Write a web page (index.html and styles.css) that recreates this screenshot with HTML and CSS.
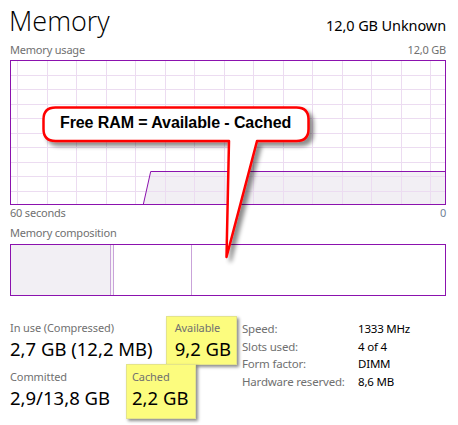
FILE: index.html
```html
<!DOCTYPE html>
<html>
<head>
<meta charset="utf-8">
<link rel="stylesheet" href="styles.css">
</head>
<body>
<div class="page">
  <div class="header">
    <div class="title">Memory</div>
    <div class="subtitle">12,0 GB Unknown</div>
  </div>
  <div class="label-row top-label">
    <span>Memory usage</span><span>12,0 GB</span>
  </div>
  <svg class="graph" width="436" height="145" viewBox="0 0 436 145">
    <polygon points="133.3,144.5 140.7,111.5 435.5,111.5 435.5,144.5" fill="#f2eff4"/>
    <g stroke="#ecdcf1" stroke-width="1">
      <line x1="7.5" y1="0" x2="7.5" y2="145"/>
      <line x1="37.5" y1="0" x2="37.5" y2="145"/>
      <line x1="66.5" y1="0" x2="66.5" y2="145"/>
      <line x1="96.5" y1="0" x2="96.5" y2="145"/>
      <line x1="125.5" y1="0" x2="125.5" y2="145"/>
      <line x1="155.5" y1="0" x2="155.5" y2="145"/>
      <line x1="184.5" y1="0" x2="184.5" y2="145"/>
      <line x1="214.5" y1="0" x2="214.5" y2="145"/>
      <line x1="243.5" y1="0" x2="243.5" y2="145"/>
      <line x1="273.5" y1="0" x2="273.5" y2="145"/>
      <line x1="302.5" y1="0" x2="302.5" y2="145"/>
      <line x1="332.5" y1="0" x2="332.5" y2="145"/>
      <line x1="361.5" y1="0" x2="361.5" y2="145"/>
      <line x1="391.5" y1="0" x2="391.5" y2="145"/>
      <line x1="420.5" y1="0" x2="420.5" y2="145"/>
      <line x1="0" y1="15.5" x2="436" y2="15.5"/>
      <line x1="0" y1="29.5" x2="436" y2="29.5"/>
      <line x1="0" y1="44.5" x2="436" y2="44.5"/>
      <line x1="0" y1="58.5" x2="436" y2="58.5"/>
      <line x1="0" y1="73.5" x2="436" y2="73.5"/>
      <line x1="0" y1="87.5" x2="436" y2="87.5"/>
      <line x1="0" y1="102.5" x2="436" y2="102.5"/>
      <line x1="0" y1="116.5" x2="436" y2="116.5"/>
      <line x1="0" y1="131.5" x2="436" y2="131.5"/>
    </g>
    <polyline points="0,144.5 133.3,144.5 140.7,111.5 436,111.5" fill="none" stroke="#8b12ae" stroke-width="1"/>
    <rect x="0.5" y="0.5" width="435" height="144" fill="none" stroke="#8b12ae" stroke-width="1"/>
  </svg>
  <div class="label-row axis">
    <span>60 seconds</span><span class="zero">0</span>
  </div>
  <div class="label-row comp-label"><span>Memory composition</span></div>
  <div class="composition">
    <div class="seg inuse"></div>
    <div class="seg modified"></div>
    <div class="seg standby"></div>
    <div class="seg free"></div>
  </div>
  <div class="stats">
    <div class="left">
      <div class="stat-row">
        <div class="stat">
          <div class="stat-label">In use (Compressed)</div>
          <div class="stat-value">2,7 GB (12,2 MB)</div>
        </div>
        <div class="stat hl hl-available">
          <div class="stat-label">Available</div>
          <div class="stat-value">9,2 GB</div>
        </div>
      </div>
      <div class="stat-row">
        <div class="stat">
          <div class="stat-label">Committed</div>
          <div class="stat-value">2,9/13,8 GB</div>
        </div>
        <div class="stat hl hl-cached">
          <div class="stat-label">Cached</div>
          <div class="stat-value">2,2 GB</div>
        </div>
      </div>
    </div>
    <div class="props">
      <div class="prop-label">Speed:</div><div class="prop-value">1333 MHz</div>
      <div class="prop-label">Slots used:</div><div class="prop-value">4 of 4</div>
      <div class="prop-label">Form factor:</div><div class="prop-value">DIMM</div>
      <div class="prop-label">Hardware reserved:</div><div class="prop-value">8,6 MB</div>
    </div>
  </div>
</div>

<div class="callout">
  <svg class="callout-shape" width="300" height="170" viewBox="0 0 300 170">
    <defs>
      <filter id="sh" x="-10%" y="-10%" width="130%" height="130%">
        <feDropShadow dx="4" dy="4" stdDeviation="2.2" flood-color="#000" flood-opacity="0.45"/>
      </filter>
    </defs>
    <path d="M 14.5 2.5 H 255.5 Q 267.5 2.5 267.5 14.5 V 24 Q 267.5 36 255.5 36 H 216 L 185.5 152 L 188 36 H 14.5 Q 2.5 36 2.5 24 V 14.5 Q 2.5 2.5 14.5 2.5 Z" fill="#fff" stroke="#ff0000" stroke-width="2.5" stroke-linejoin="round" filter="url(#sh)"/>
  </svg>
  <div class="callout-text">Free RAM = Available - Cached</div>
</div>
</body>
</html>
```
FILE: styles.css
```css
* { box-sizing: border-box; }
html, body { margin: 0; padding: 0; background: #fff; }
body {
  font-family: "Noto Sans", "Open Sans", sans-serif;
  color: #000;
  position: relative;
  width: 458px;
  height: 425px;
  overflow: hidden;
}
.page {
  padding: 0 12px 0 10px;
}
.header {
  display: flex;
  justify-content: space-between;
  align-items: baseline;
  height: 42px;
}
.title {
  font-family: "Open Sans", sans-serif;
  font-weight: 300;
  font-size: 27px;
  line-height: 42px;
  margin-left: -1px;
}
.subtitle {
  font-size: 14.5px;
  letter-spacing: -0.1px;
}
.label-row {
  display: flex;
  justify-content: space-between;
  font-size: 11px;
  letter-spacing: -0.2px;
  color: #707070;
  line-height: 15px;
}
.top-label { height: 18px; margin-top: 0; }
.graph { display: block; }
.axis { height: 20px; }
.zero { color: #6f8196; }
.comp-label { height: 19px; }
.composition {
  display: flex;
  height: 52px;
  border: 1px solid #8b12ae;
}
.seg { height: 100%; }
.inuse { width: 100px; background: #f2eff4; border-right: 1px solid #c9a3d9; }
.modified { width: 3px; background: #f7f5f8; border-right: 1px solid #c9a3d9; }
.standby { width: 78px; border-right: 1px solid #c9a3d9; }
.free { flex: 1; }

.stats {
  display: flex;
  align-items: flex-start;
  margin-top: 24px;
}
.left {
  width: 232px;
  display: flex;
  flex-direction: column;
  gap: 7px;
}
.stat-row {
  display: flex;
  gap: 22px;
}
.stat-label {
  font-size: 11px;
  letter-spacing: -0.1px;
  color: #707070;
  line-height: 16px;
}
.stat-value {
  font-size: 18.5px;
  line-height: 26px;
}
.hl {
  background: #fcfc7e;
  border: 1px solid #e4e48a;
  box-shadow: 2px 2px 3px rgba(0,0,0,0.45);
}
.hl-available {
  padding: 3px 5px 2px 8px;
  margin: -4px -6px -3px -9px;
}
.hl-cached {
  padding: 4px 7px 7px 5px;
  margin: -5px -8px -8px -6px;
}
.props {
  display: grid;
  grid-template-columns: 116px auto;
  align-content: start;
  font-size: 11.5px;
  letter-spacing: -0.2px;
  line-height: 17.7px;
  margin-top: 0;
}
.prop-label { color: #707070; }
.prop-value { color: #000; }

.callout {
  position: absolute;
  left: 41px;
  top: 105px;
  width: 300px;
  height: 170px;
}
.callout-shape { position: absolute; left: 0; top: 0; }
.callout-text {
  position: absolute;
  left: 19px;
  top: 8px;
  font-family: "Liberation Sans", Arial, sans-serif;
  font-weight: bold;
  font-size: 16px;
  letter-spacing: -0.1px;
  line-height: 20px;
  white-space: nowrap;
}
```
